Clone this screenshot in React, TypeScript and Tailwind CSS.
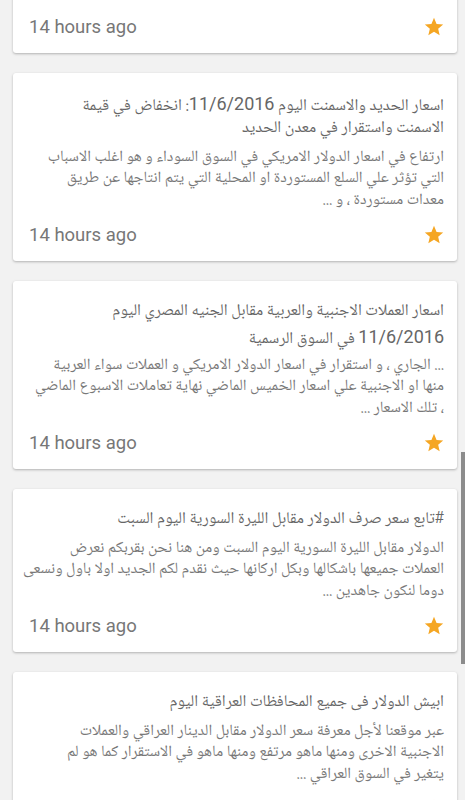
import React from "react";

const Star = () => (
  <svg width="22" height="22" viewBox="0 0 24 24" className="shrink-0">
    <path
      d="M12 17.27L18.18 21l-1.64-7.03L22 9.24l-7.19-.61L12 2 9.19 8.63 2 9.24l5.46 4.73L5.82 21z"
      fill="#f5a623"
    />
  </svg>
);

type CardProps = {
  title?: React.ReactNode[];
  body?: string[];
  first?: boolean;
};

const Footer = () => (
  <div className="flex items-center justify-between h-[24px] pr-[12px]" dir="ltr">
    <span className="text-[18.5px] leading-[24px] text-[#777777] font-['Roboto',sans-serif]">14 hours ago</span>
    <Star />
  </div>
);

const Num = ({ children }: { children: React.ReactNode }) => (
  <span className="text-[18px] font-['Roboto',sans-serif]">{children}</span>
);

const Card = ({ title, body, first }: CardProps) => (
  <div
    className={
      first
        ? "bg-white rounded-[3px] shadow-[0_1px_3px_rgba(0,0,0,0.18),0_1px_2px_rgba(0,0,0,0.1)] pl-[16px] pb-[14px] pt-[35px] -mt-[20px]"
        : "bg-white rounded-[3px] shadow-[0_1px_3px_rgba(0,0,0,0.18),0_1px_2px_rgba(0,0,0,0.1)] pl-[16px] pb-[14px] pt-[18px]"
    }
  >
    {title && (
      <div
        dir="rtl"
        className="flex flex-col pr-[13px] text-[16.3px] leading-[25px] text-[#666666] font-['Noto_Naskh_Arabic',sans-serif]"
      >
        {title.map((l, i) => (
          <div key={i} className="h-[25px] whitespace-nowrap">{l}</div>
        ))}
      </div>
    )}
    {body && (
      <div
        dir="rtl"
        className="flex flex-col pr-[13px] mt-[6px] text-[15.8px] leading-[21.5px] text-[#787878] font-['Noto_Naskh_Arabic',sans-serif]"
      >
        {body.map((l, i) => (
          <div key={i} className="h-[21.5px] whitespace-nowrap">{l}</div>
        ))}
      </div>
    )}
    <div className={first ? "" : "mt-[12px]"}>
      <Footer />
    </div>
  </div>
);

export default function App() {
  return (
    <div className="relative w-[465px] h-[800px] overflow-hidden bg-[#f2f2f2]">
      <div className="flex flex-col gap-[19.5px] ml-[13px] mr-[8px]">
        <Card first />
        <Card
          title={[
            <>اسعار الحديد والاسمنت اليوم <Num>11/6/2016</Num>: انخفاض في قيمة</>,
            "الاسمنت واستقرار في معدن الحديد",
          ]}
          body={[
            "ارتفاع في اسعار الدولار الامريكي في السوق السوداء و هو اغلب الاسباب",
            "التي تؤثر علي السلع المستوردة او المحلية التي يتم انتاجها عن طريق",
            "معدات مستوردة ، و ...",
          ]}
        />
        <Card
          title={[
            "اسعار العملات الاجنبية والعربية مقابل الجنيه المصري اليوم",
            <><Num>11/6/2016</Num> في السوق الرسمية</>,
          ]}
          body={[
            "... الجاري ، و استقرار في اسعار الدولار الامريكي و العملات سواء العربية",
            "منها او الاجنبية علي اسعار الخميس الماضي نهاية تعاملات الاسبوع الماضي",
            "، تلك الاسعار ...",
          ]}
        />
        <Card
          title={["#تابع سعر صرف الدولار مقابل الليرة السورية اليوم السبت"]}
          body={[
            "الدولار مقابل الليرة السورية اليوم السبت ومن هنا نحن بقربكم نعرض",
            "العملات جميعها باشكالها وبكل اركانها حيث نقدم لكم الجديد اولا باول ونسعى",
            "دوما لنكون جاهدين ...",
          ]}
        />
        <Card
          title={["ابيش الدولار فى جميع المحافظات العراقية اليوم"]}
          body={[
            "عبر موقعنا لأجل معرفة سعر الدولار مقابل الدينار العراقي والعملات",
            "الاجنبية الاخرى ومنها ماهو مرتفع ومنها ماهو في الاستقرار كما هو لم",
            "يتغير في السوق العراقي ...",
          ]}
        />
      </div>
      <div className="absolute right-0 top-[452px] w-[4px] h-[212px] bg-[#8c8c8c]" />
    </div>
  );
}
